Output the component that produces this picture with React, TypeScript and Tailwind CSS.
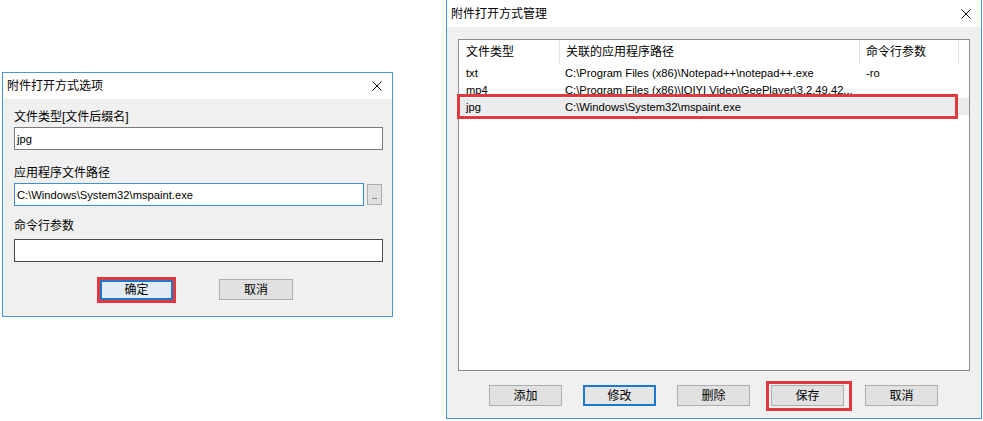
import React from "react";

function CloseX() {
  return (
    <svg width="10" height="10" viewBox="0 0 10 10" className="shrink-0">
      <path d="M0.5 0.5L9.5 9.5M9.5 0.5L0.5 9.5" stroke="#111" strokeWidth="1" />
    </svg>
  );
}

function WinButton({ label, focused = false }: { label: string; focused?: boolean }) {
  return (
    <div
      className={
        focused
          ? "w-[73px] h-[21px] border-2 border-[#1a78cf] bg-[#e5e5e5] flex items-center justify-center"
          : "w-[73px] h-[21px] border border-[#adadad] bg-[#e1e1e1] flex items-center justify-center"
      }
    >
      {label}
    </div>
  );
}

const rows = [
  { type: "txt", path: "C:\\Program Files (x86)\\Notepad++\\notepad++.exe", args: "-ro" },
  { type: "mp4", path: "C:\\Program Files (x86)\\IQIYI Video\\GeePlayer\\3.2.49.42...", args: "" },
  { type: "jpg", path: "C:\\Windows\\System32\\mspaint.exe", args: "" },
];

export default function App() {
  return (
    <div className="w-[983px] h-[421px] bg-white flex items-start overflow-hidden text-[12px] leading-4 text-black font-['Liberation_Sans','Noto_Sans_CJK_SC',sans-serif]">
      {/* Left dialog: options */}
      <div className="mt-[72px] ml-[2px] w-[391px] h-[245px] border border-[#4a96d6] bg-[#f0f0f0] flex flex-col">
        <div className="h-[26px] bg-white flex items-center justify-between pl-[4px] pr-[10px]">
          <span>附件打开方式选项</span>
          <CloseX />
        </div>
        <div className="flex flex-col pl-[11px] pt-[10px]">
          <div className="h-4">文件类型[文件后缀名]</div>
          <div className="mt-[2px] w-[369px] h-[23px] border border-[#7a7a7a] bg-white flex items-center pl-[2px] text-[11.2px]">
            jpg
          </div>
          <div className="mt-[15px] h-4">应用程序文件路径</div>
          <div className="mt-[2px] flex items-center">
            <div className="w-[350px] h-[23px] border border-[#3d8fd8] bg-white flex items-center pl-[2px] text-[11.2px]">
              C:\Windows\System32\mspaint.exe
            </div>
            <div className="ml-[3px] w-[15px] h-[21px] border border-[#adadad] bg-[#e1e1e1] flex items-end justify-center pb-[3px] text-[10px] leading-none">
              ..
            </div>
          </div>
          <div className="mt-[12px] h-4">命令行参数</div>
          <div className="mt-[5px] w-[369px] h-[23px] border border-[#4a4a4a] bg-white" />
          <div className="mt-[15px] flex items-start">
            <div className="ml-[83px] w-[79px] h-[26px] border-[3px] border-[#e0393e]">
              <div className="w-full h-full border-2 border-[#1a78cf] bg-[#e3ecf4] flex items-center justify-center">
                确定
              </div>
            </div>
            <div className="ml-[43px] mt-[2px] w-[74px] h-[21px] border border-[#adadad] bg-[#e1e1e1] flex items-center justify-center">
              取消
            </div>
          </div>
        </div>
      </div>

      {/* Right dialog: manager */}
      <div className="ml-[53px] w-[536px] h-[419px] border border-t-0 border-[#4a96d6] bg-[#f0f0f0] flex flex-col">
        <div className="h-[27px] bg-white flex items-center justify-between pl-[4px] pr-[10px]">
          <span>附件打开方式管理</span>
          <CloseX />
        </div>
        <div className="mt-[12px] ml-[11px] w-[512px] h-[332px] border border-[#8c8c8c] bg-white flex flex-col">
          <div className="h-[24px] flex items-stretch">
            <div className="w-[101px] border-r border-[#e5e5e5] pl-[7px] flex items-center">文件类型</div>
            <div className="w-[300px] border-r border-[#e5e5e5] pl-[6px] flex items-center">关联的应用程序路径</div>
            <div className="w-[99px] border-r border-[#e5e5e5] pl-[6px] flex items-center">命令行参数</div>
          </div>
          {rows.map((r, i) => (
            <div
              key={r.type}
              className={
                i === 2
                  ? "relative h-[17px] flex items-center bg-[#ececec] text-[11.2px]"
                  : "relative h-[17px] flex items-center text-[11.2px]"
              }
            >
              <div className="w-[101px] pl-[7px] whitespace-nowrap">{r.type}</div>
              <div className="w-[300px] pl-[5px] whitespace-nowrap overflow-hidden">{r.path}</div>
              <div className="w-[99px] pl-[6px] whitespace-nowrap">{r.args}</div>
              {i === 2 && (
                <div className="absolute -left-[2px] right-[11px] -top-[4px] -bottom-[4px] border-[3px] border-[#e0393e]" />
              )}
            </div>
          ))}
        </div>
        <div className="mt-[14px] ml-[42px] flex items-center gap-[21px]">
          <WinButton label="添加" />
          <WinButton label="修改" focused />
          <WinButton label="删除" />
          <div className="relative">
            <WinButton label="保存" />
            <div className="absolute -left-[5px] -right-[8px] -top-[4px] -bottom-[5px] border-[3px] border-[#e0393e]" />
          </div>
          <WinButton label="取消" />
        </div>
      </div>
    </div>
  );
}
